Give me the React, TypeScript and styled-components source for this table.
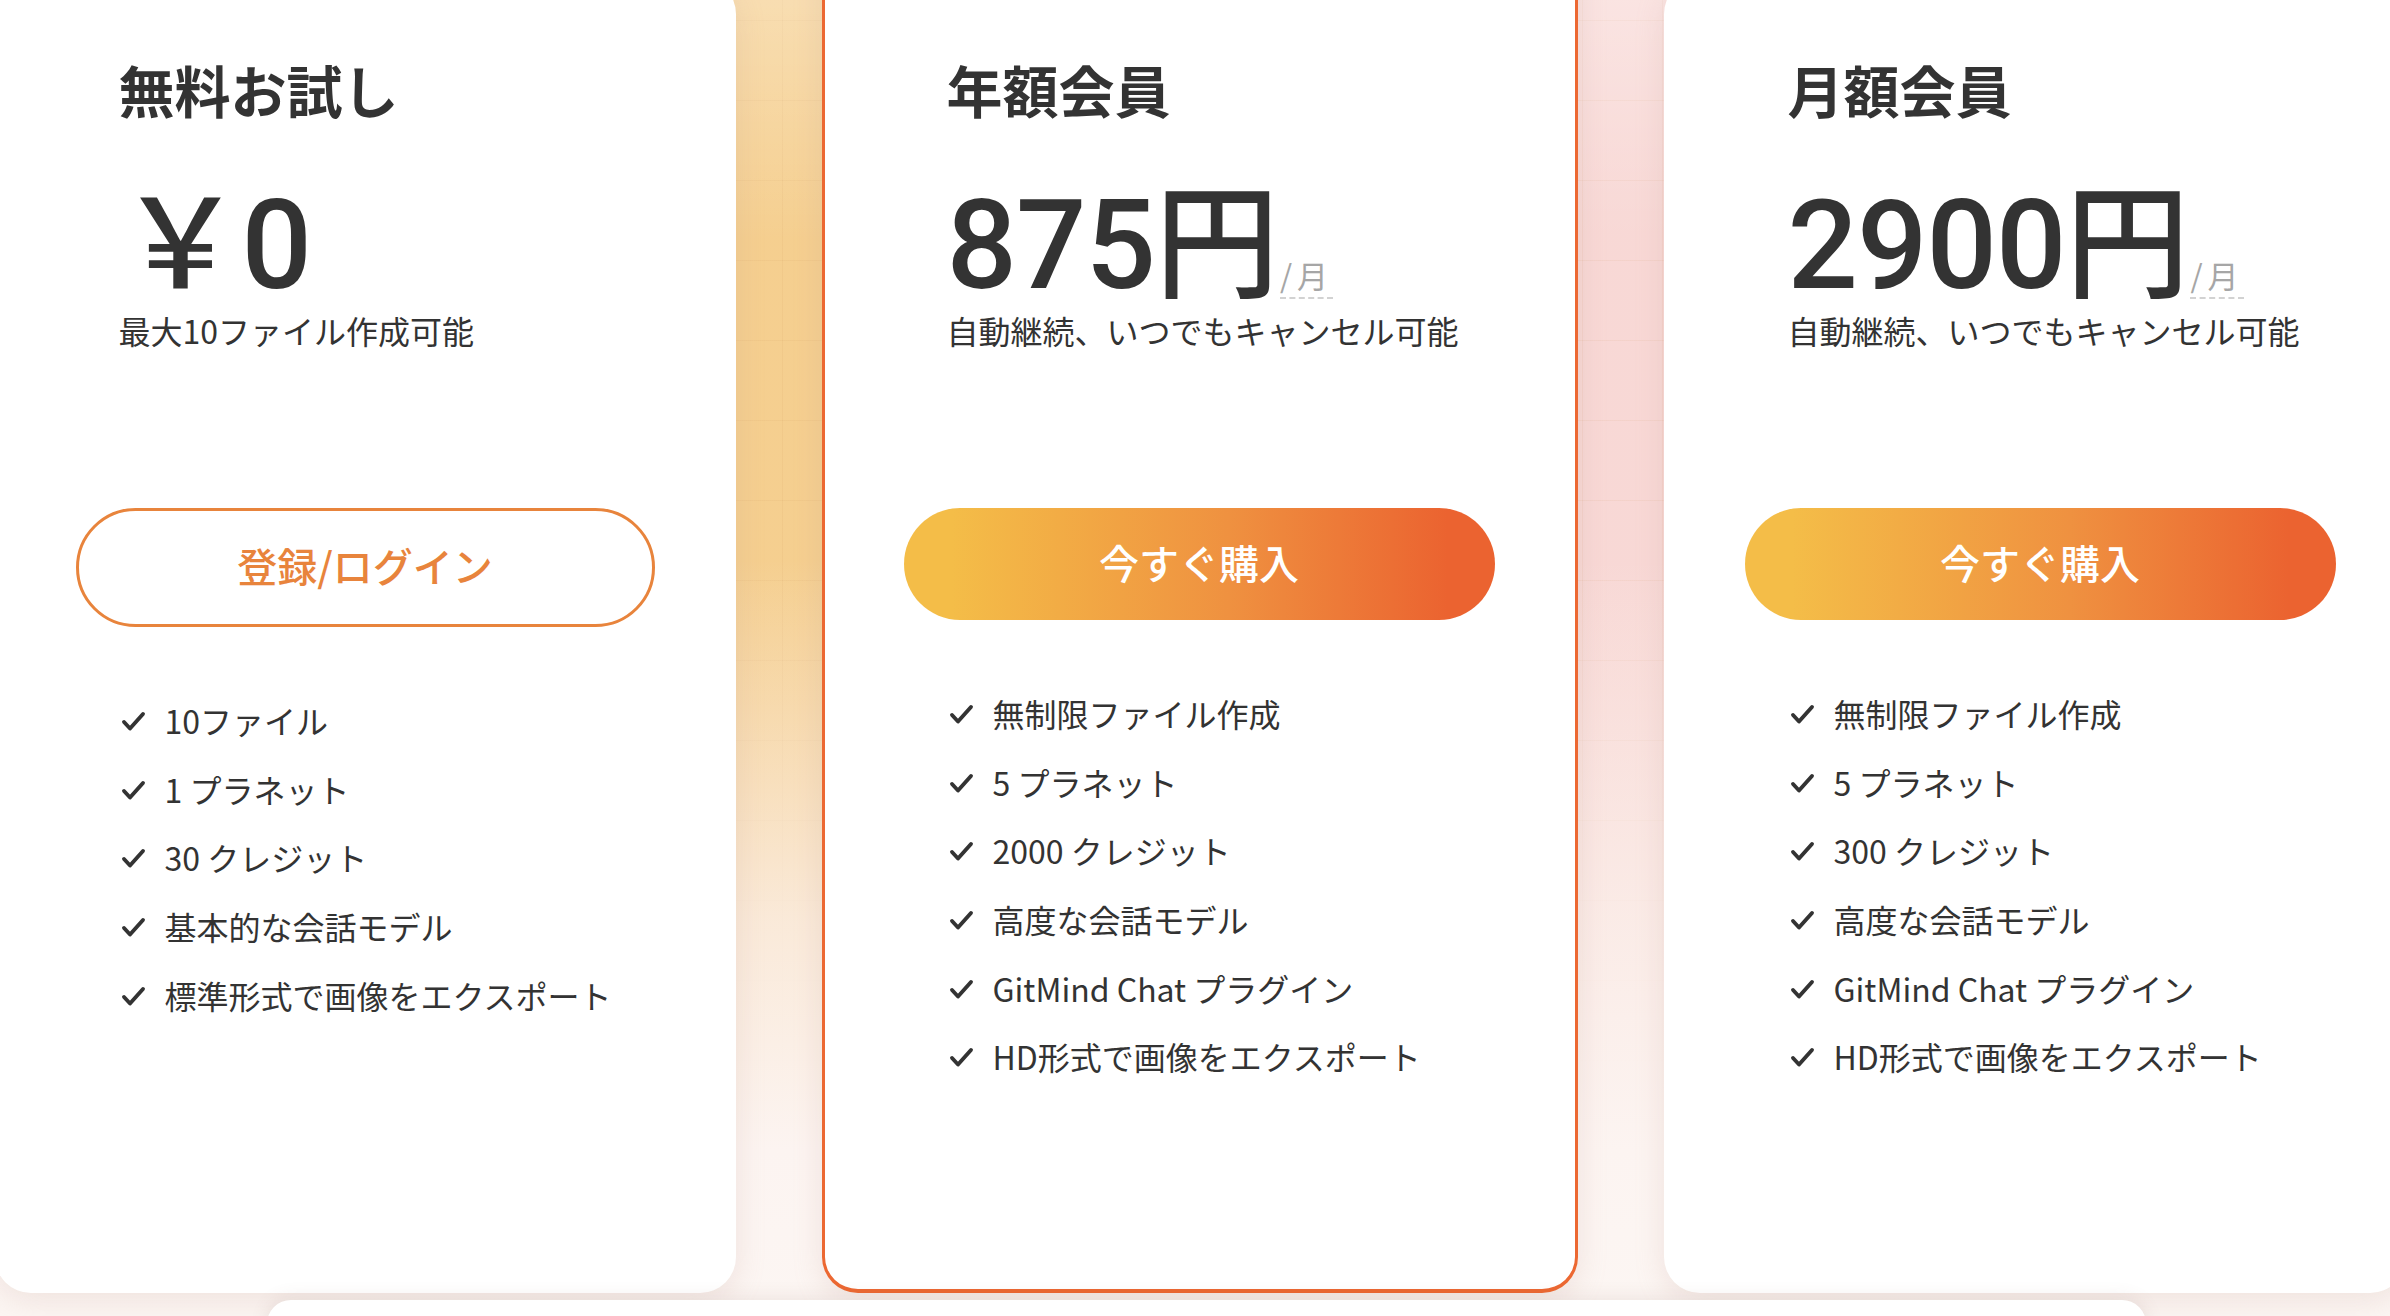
import React from "react";
import styled, { createGlobalStyle } from "styled-components";

const GlobalStyle = createGlobalStyle`
  html, body {
    margin: 0;
    padding: 0;
    width: 2390px;
    height: 1316px;
    overflow: hidden;
    background: #fcf5f1;
  }
  #root {
    width: 2390px;
    height: 1316px;
  }
  * {
    box-sizing: border-box;
  }
`;

const Stage = styled.main`
  width: 2390px;
  height: 1316px;
  overflow: hidden;
  display: flex;
  flex-direction: column;
  background:
    linear-gradient(
      180deg,
      rgba(255, 255, 255, 0.3) 0px,
      rgba(255, 255, 255, 0) 240px,
      rgba(255, 255, 255, 0) 560px,
      rgba(251, 240, 235, 0.8) 920px,
      #fcf4f1 1150px,
      #fcf6f3 1316px
    ),
    linear-gradient(90deg, rgba(190, 130, 70, 0.08) 1px, transparent 1px) 62px 20px / 80px 80px,
    linear-gradient(180deg, rgba(190, 130, 70, 0.08) 1px, transparent 1px) 62px 20px / 80px 80px,
    linear-gradient(90deg, #f5ce8c 0%, #f5cf90 38%, #f8d8d5 62%, #f8d9d8 100%);
`;

const CardsRow = styled.section`
  display: flex;
  justify-content: center;
  align-items: flex-end;
  gap: 86px;
  padding-left: 10px;
  margin-top: -22px;
  height: 1315px;
  flex-shrink: 0;
`;

const Card = styled.article<{ $featured?: boolean }>`
  flex: 0 0 ${(p) => (p.$featured ? 756 : 741)}px;
  height: ${(p) => (p.$featured ? "calc(100% + 40px)" : "100%")};
  background: #ffffff;
  border-radius: 36px;
  border: ${(p) => (p.$featured ? "3px solid #ec6832" : "none")};
  border-bottom-width: ${(p) => (p.$featured ? "4px" : "0")};
  box-shadow: 0 8px 30px rgba(190, 150, 140, 0.2);
  padding: ${(p) => (p.$featured ? "120px 70px 0 79px" : "83px 70px 0 81px")};
  display: flex;
  flex-direction: column;
  align-items: flex-start;
`;

const PlanTitle = styled.h2`
  margin: 0 0 0 43px;
  font: 700 56px/56px "Noto Sans CJK JP", sans-serif;
  color: #333333;
`;

const PriceRow = styled.div`
  margin: 67px 0 0 43px;
  display: flex;
  align-items: baseline;
  font-family: Roboto, "Noto Sans CJK JP", sans-serif;
  color: #333333;
`;

const Amount = styled.span`
  font-size: 124px;
  line-height: 124px;
  font-weight: 500;
  letter-spacing: -1px;
`;

const PerMonth = styled.span`
  margin-left: 2px;
  font: 400 31px/1 "Noto Sans CJK JP", sans-serif;
  letter-spacing: 5px;
  color: #a6a6a6;
  padding-bottom: 7px;
  border-bottom: 2px dashed #d2d2d2;
`;

const Note = styled.p`
  margin: 0 0 0 43px;
  font: 400 32px/44px "Noto Sans CJK JP", sans-serif;
  color: #333333;
`;

const OutlineButton = styled.button`
  margin-top: 156px;
  width: 579px;
  height: 119px;
  padding: 0 0 5px;
  border-radius: 60px;
  border: 3.5px solid #e8843c;
  background: #ffffff;
  color: #e8843c;
  font: 500 40px/1 "Noto Sans CJK JP", sans-serif;
  cursor: pointer;
`;

const GradientButton = styled.button`
  margin-top: 156px;
  width: 591px;
  height: 112px;
  padding: 0 0 5px;
  border: none;
  border-radius: 56px;
  background: linear-gradient(90deg, #f4bd48 8%, #ef9140 55%, #eb6330 92%);
  color: #ffffff;
  font: 500 40px/1 "Noto Sans CJK JP", sans-serif;
  cursor: pointer;
`;

const FeatureList = styled.ul`
  list-style: none;
  margin: 59px 0 0 43px;
  padding: 0;
`;

const FeatureItem = styled.li`
  height: 68.6px;
  display: flex;
  align-items: center;
  gap: 18px;
  font: 400 32px/1 "Noto Sans CJK JP", sans-serif;
  color: #333333;
  white-space: nowrap;
`;

const CheckIcon = styled.svg`
  flex: 0 0 28px;
  margin-top: 4px;
`;

const BottomPanel = styled.div`
  margin: 7px 0 0 267px;
  width: 1879px;
  height: 200px;
  flex-shrink: 0;
  background: #ffffff;
  border-radius: 24px 24px 0 0;
  box-shadow: 0 -2px 18px rgba(120, 90, 80, 0.12);
`;

const Check = () => (
  <CheckIcon width="28" height="26" viewBox="0 0 28 26" aria-hidden="true">
    <path
      d="M5 13 L11 19.5 L24 5"
      fill="none"
      stroke="#333333"
      strokeWidth="3.9"
      strokeLinecap="round"
      strokeLinejoin="round"
    />
  </CheckIcon>
);

type Plan = {
  title: string;
  amount: string;
  perMonth: boolean;
  note: string;
  cta: string;
  outline: boolean;
  featured: boolean;
  features: string[];
};

const plans: Plan[] = [
  {
    title: "無料お試し",
    amount: "￥0",
    perMonth: false,
    note: "最大10ファイル作成可能",
    cta: "登録/ログイン",
    outline: true,
    featured: false,
    features: ["10ファイル", "1 プラネット", "30 クレジット", "基本的な会話モデル", "標準形式で画像をエクスポート"],
  },
  {
    title: "年額会員",
    amount: "875円",
    perMonth: true,
    note: "自動継続、いつでもキャンセル可能",
    cta: "今すぐ購入",
    outline: false,
    featured: true,
    features: [
      "無制限ファイル作成",
      "5 プラネット",
      "2000 クレジット",
      "高度な会話モデル",
      "GitMind Chat プラグイン",
      "HD形式で画像をエクスポート",
    ],
  },
  {
    title: "月額会員",
    amount: "2900円",
    perMonth: true,
    note: "自動継続、いつでもキャンセル可能",
    cta: "今すぐ購入",
    outline: false,
    featured: false,
    features: [
      "無制限ファイル作成",
      "5 プラネット",
      "300 クレジット",
      "高度な会話モデル",
      "GitMind Chat プラグイン",
      "HD形式で画像をエクスポート",
    ],
  },
];

export default function App() {
  return (
    <>
      <GlobalStyle />
      <Stage>
        <CardsRow>
          {plans.map((p) => (
            <Card key={p.title} $featured={p.featured}>
              <PlanTitle>{p.title}</PlanTitle>
              <PriceRow>
                <Amount>{p.amount}</Amount>
                {p.perMonth && <PerMonth>/月</PerMonth>}
              </PriceRow>
              <Note>{p.note}</Note>
              {p.outline ? (
                <OutlineButton>{p.cta}</OutlineButton>
              ) : (
                <GradientButton>{p.cta}</GradientButton>
              )}
              <FeatureList>
                {p.features.map((f) => (
                  <FeatureItem key={f}>
                    <Check />
                    {f}
                  </FeatureItem>
                ))}
              </FeatureList>
            </Card>
          ))}
        </CardsRow>
        <BottomPanel />
      </Stage>
    </>
  );
}
